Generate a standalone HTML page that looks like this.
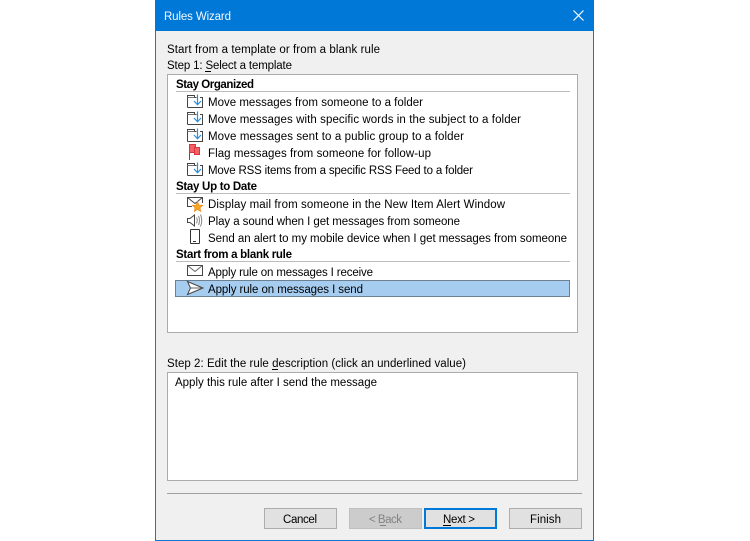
<!DOCTYPE html>
<html><head><meta charset="utf-8"><style>
html,body{margin:0;padding:0;width:750px;height:541px;overflow:hidden;background:#fff}
svg{display:block}
text{font-family:"Liberation Sans",sans-serif;font-size:11.5px;fill:#000}
.b{font-weight:bold}
</style></head><body>
<svg width="750" height="541" viewBox="0 0 750 541" xmlns="http://www.w3.org/2000/svg">
<defs>
<g id="mv">
<path d="M0.500 12.500V0.500H7.500V2.500H9.500M13 2.500H15.500V12.500H0.500" fill="#fff" stroke="#444"/>
<path d="M0.500 2.500H7.500" fill="none" stroke="#777"/>
<path d="M10.500 -0.500V9.500M7 6L10.500 9.800L14 6" fill="none" stroke="#2b8fd8" stroke-width="1.200"/>
</g>
</defs>
<rect x="155.500" y="0.500" width="438" height="540" fill="#f0f0f0" stroke="#0f78d4"/>
<rect x="155" y="0" width="439" height="31" fill="#0078d7"/>
<text x="164" y="20" style="fill:#f4f9fd" textLength="67" lengthAdjust="spacing">Rules Wizard</text>
<path d="M573.500 10.500L583.500 20.500M583.500 10.500L573.500 20.500" stroke="#fff" stroke-width="1.200" fill="none"/>

<text x="167" y="53" textLength="213" lengthAdjust="spacing">Start from a template or from a blank rule</text>
<text x="167" y="69" textLength="125" lengthAdjust="spacing">Step 1: Select a template</text>
<rect x="205" y="71" width="6" height="1" fill="#000"/>

<rect x="167.500" y="74.500" width="410" height="258" fill="#fff" stroke="#ababab"/>
<rect x="175" y="280" width="395" height="17" fill="#a6cdf0"/>
<rect x="175.500" y="280.500" width="394" height="16" fill="none" stroke="#333" stroke-dasharray="1 1"/>

<text class="b" x="176" y="88" textLength="78" lengthAdjust="spacing">Stay Organized</text>
<rect x="176" y="91" width="394" height="1" fill="#bdbdbd"/>
<use href="#mv" x="187" y="95"/>
<text x="208" y="106" textLength="215" lengthAdjust="spacing">Move messages from someone to a folder</text>
<use href="#mv" x="187" y="112"/>
<text x="208" y="123" textLength="313" lengthAdjust="spacing">Move messages with specific words in the subject to a folder</text>
<use href="#mv" x="187" y="129"/>
<text x="208" y="140" textLength="256" lengthAdjust="spacing">Move messages sent to a public group to a folder</text>
<path d="M189.500 145V160" stroke="#555" fill="none"/>
<rect x="189.500" y="144.500" width="6" height="8" fill="#f4606a" stroke="#d9343a"/>
<rect x="194.500" y="147.500" width="5" height="7" fill="#f4606a" stroke="#d9343a"/>
<text x="208" y="157" textLength="223" lengthAdjust="spacing">Flag messages from someone for follow-up</text>
<use href="#mv" x="187" y="163"/>
<text x="208" y="174" textLength="265" lengthAdjust="spacing">Move RSS items from a specific RSS Feed to a folder</text>

<text class="b" x="176" y="190" textLength="81" lengthAdjust="spacing">Stay Up to Date</text>
<rect x="176" y="193" width="394" height="1" fill="#bdbdbd"/>
<path d="M192 206.500H187.500V197.500H202.500V203M187.500 197.500L195 203.500L202.500 197.500" fill="#fff" stroke="#444"/>
<path d="M197.500 201.500L199 205L202.800 205.300L200 207.800L200.800 211.500L197.500 209.500L194.200 211.500L195 207.800L192.200 205.300L196 205Z" fill="#f5a623" stroke="#e8861a" stroke-width=".6"/>
<text x="208" y="208" textLength="297" lengthAdjust="spacing">Display mail from someone in the New Item Alert Window</text>
<path d="M187.500 218.500H190L194.500 215V226L190 222.500H187.500Z" fill="#fff" stroke="#444"/>
<path d="M196.500 217.500Q198 220.500 196.500 223.500M198.500 216Q200.500 220.500 198.500 225M200.500 214.500Q203 220.500 200.500 226.500" fill="none" stroke="#888"/>
<text x="208" y="225" textLength="252" lengthAdjust="spacing">Play a sound when I get messages from someone</text>
<rect x="190.500" y="229.500" width="9" height="14" rx=".5" fill="#fff" stroke="#333"/>
<rect x="193" y="241" width="3" height="1" fill="#333"/>
<text x="208" y="242" textLength="359" lengthAdjust="spacing">Send an alert to my mobile device when I get messages from someone</text>

<text class="b" x="176" y="258" textLength="116" lengthAdjust="spacing">Start from a blank rule</text>
<rect x="176" y="261" width="394" height="1" fill="#bdbdbd"/>
<rect x="187.500" y="265.500" width="15" height="10" fill="#fff" stroke="#444"/>
<path d="M187.500 265.500L195 271.500L202.500 265.500" fill="none" stroke="#666"/>
<text x="208" y="276" textLength="165" lengthAdjust="spacing">Apply rule on messages I receive</text>
<path d="M187.500 281.500L203 288L187.500 294.500L190.500 288Z" fill="#fff" stroke="#444"/>
<path d="M190.500 288H202" fill="none" stroke="#666"/>
<text x="208" y="293" textLength="155" lengthAdjust="spacing">Apply rule on messages I send</text>

<text x="167" y="367" textLength="299" lengthAdjust="spacing">Step 2: Edit the rule description (click an underlined value)</text>
<rect x="272" y="369" width="6" height="1" fill="#000"/>
<rect x="167.500" y="372.500" width="410" height="108" fill="#fff" stroke="#ababab"/>
<text x="175" y="386" textLength="202" lengthAdjust="spacing">Apply this rule after I send the message</text>

<rect x="167" y="493" width="415" height="1" fill="#a0a0a0"/>
<rect x="264.500" y="508.500" width="72" height="20" fill="#e1e1e1" stroke="#adadad"/>
<text x="283" y="523" textLength="34" lengthAdjust="spacing">Cancel</text>
<rect x="349.500" y="508.500" width="72" height="20" fill="#cccccc" stroke="#bfbfbf"/>
<text x="369" y="523" style="fill:#838383" textLength="33" lengthAdjust="spacing">&lt; Back</text>
<rect x="380" y="525" width="6" height="1" fill="#838383"/>
<rect x="425" y="509" width="71" height="19" fill="#e1e1e1" stroke="#0078d7" stroke-width="2"/>
<text x="443" y="523" textLength="32" lengthAdjust="spacing">Next &gt;</text>
<rect x="443" y="525" width="8" height="1" fill="#000"/>
<rect x="509.500" y="508.500" width="72" height="20" fill="#e1e1e1" stroke="#adadad"/>
<text x="530" y="523" textLength="31" lengthAdjust="spacing">Finish</text>
</svg>
</body></html>
